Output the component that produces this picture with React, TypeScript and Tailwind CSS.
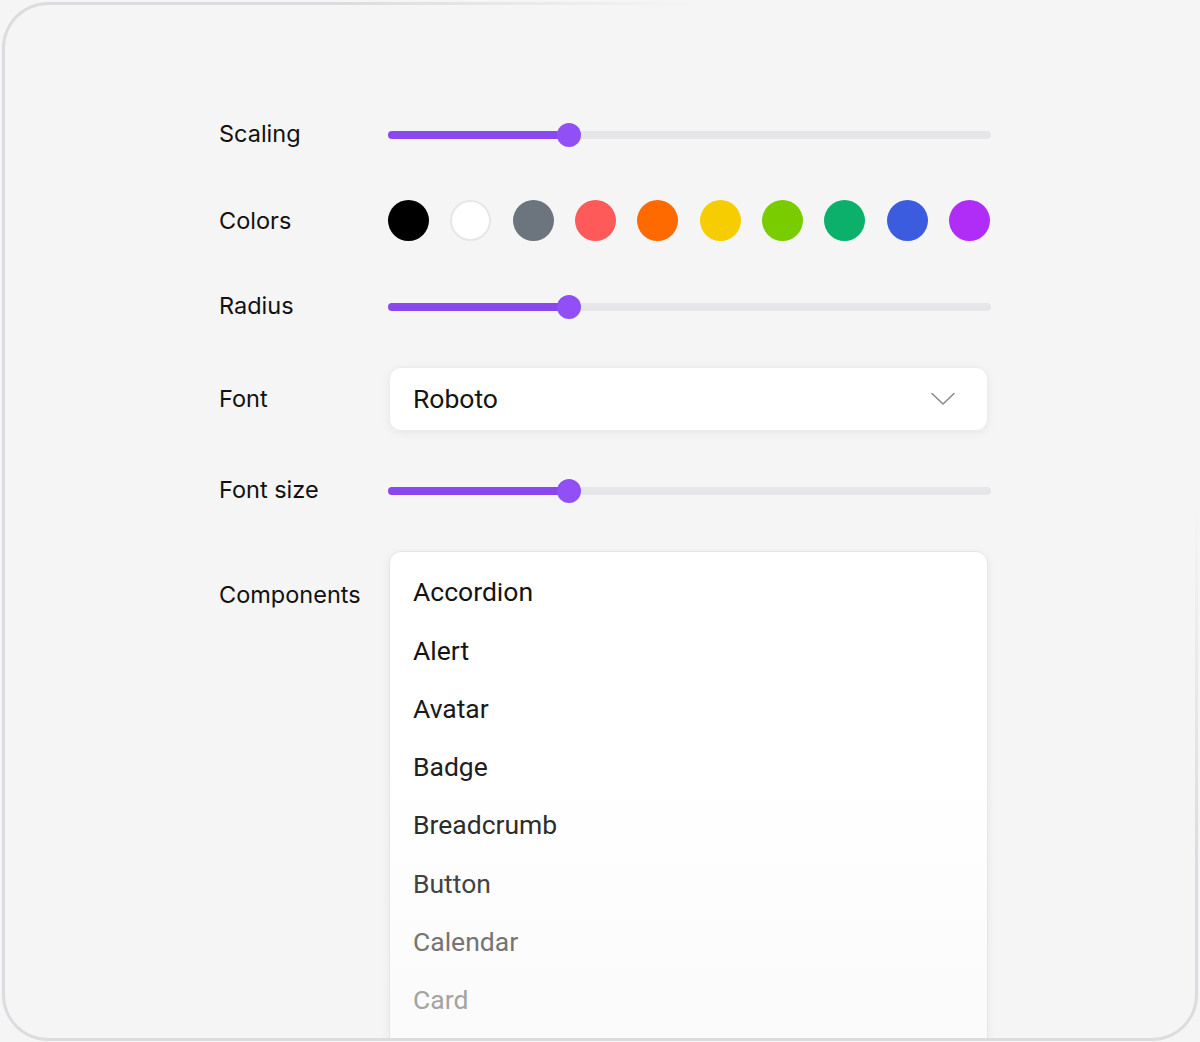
import React from "react";

const colors = [
  "bg-[#000000]",
  "bg-white border-2 border-[#e6e6e6]",
  "bg-[#6c747d]",
  "bg-[#ff5a5a]",
  "bg-[#ff6a00]",
  "bg-[#f5cd00]",
  "bg-[#79cc00]",
  "bg-[#0bb06a]",
  "bg-[#3c5ce0]",
  "bg-[#b02df7]",
];

const items: { name: string; color: string }[] = [
  { name: "Accordion", color: "text-[#141414]" },
  { name: "Alert", color: "text-[#141414]" },
  { name: "Avatar", color: "text-[#1a1a1a]" },
  { name: "Badge", color: "text-[#202020]" },
  { name: "Breadcrumb", color: "text-[#2c2c2c]" },
  { name: "Button", color: "text-[#434343]" },
  { name: "Calendar", color: "text-[#747474]" },
  { name: "Card", color: "text-[#a3a3a3]" },
];

function Slider() {
  return (
    <div className="relative flex h-full w-[603px] items-center pt-[2px]">
      <div className="h-[8px] w-full rounded-full bg-[#e6e6e9]" />
      <div className="absolute left-0 top-[calc(50%+1px)] h-[8px] w-[181px] -translate-y-1/2 rounded-full bg-[#8a47ef]" />
      <div className="absolute left-[169px] top-[calc(50%+1px)] h-[24px] w-[24px] -translate-y-1/2 rounded-full bg-[#9150f6]" />
    </div>
  );
}

function Label({ children }: { children: React.ReactNode }) {
  return (
    <div className="w-[169px] shrink-0 text-[23.5px] text-[#111111] [font-family:Inter,'Noto_Sans',sans-serif]">
      {children}
    </div>
  );
}

export default function App() {
  return (
    <div className="h-[1042px] w-[1200px] overflow-hidden bg-[#f5f5f5] px-[2px] pt-[2px]">
      <div className="h-[1039px] w-[1196px] rounded-[46px] bg-[radial-gradient(circle_at_100%_0%,#f5f5f5_500px,#dcdce0_860px)] p-[3px]">
        <div className="h-full w-full overflow-hidden rounded-[43px] bg-[#f5f5f5] pl-[214px] pt-[109px]">
          <div className="flex h-[40px] items-center">
            <Label>Scaling</Label>
            <Slider />
          </div>
          <div className="mt-[46px] flex h-[41px] items-center">
            <Label>Colors</Label>
            <div className="flex w-[603px] items-center justify-between pr-[1px]">
              {colors.map((c, i) => (
                <div key={i} className={`h-[41px] w-[41px] rounded-full ${c}`} />
              ))}
            </div>
          </div>
          <div className="mt-[45px] flex h-[40px] items-center">
            <Label>Radius</Label>
            <Slider />
          </div>
          <div className="mt-[41px] flex h-[63px] items-center">
            <Label>Font</Label>
            <div className="ml-[1px] flex h-[64px] w-[599px] items-center justify-between rounded-[12px] border border-[#ececec] bg-white pl-[23px] pr-[32px] shadow-[0_2px_10px_rgba(0,0,0,0.06)]">
              <span className="text-[26.5px] text-[#141414] [font-family:Roboto,sans-serif]">Roboto</span>
              <svg width="24" height="14" viewBox="0 0 24 14" fill="none">
                <polyline points="1,1.5 12,12 23,1.5" stroke="#8a8a8a" strokeWidth="1.6" strokeLinecap="round" strokeLinejoin="round" />
              </svg>
            </div>
          </div>
          <div className="mt-[40px] flex h-[40px] items-center">
            <Label>Font size</Label>
            <Slider />
          </div>
          <div className="mt-[41px] flex items-start">
            <div className="pt-[26px]">
              <Label>Components</Label>
            </div>
            <div className="ml-[1px] h-[560px] w-[599px] rounded-[12px] border border-[#e6e6e6] bg-[linear-gradient(to_bottom,#ffffff_40%,#f9f9f9_100%)] pt-[11px] shadow-[0_2px_10px_rgba(0,0,0,0.06)]">
              {items.map((it) => (
                <div key={it.name} className={`flex h-[58.3px] items-center pl-[23px] text-[26.5px] [font-family:Roboto,sans-serif] ${it.color}`}>
                  {it.name}
                </div>
              ))}
            </div>
          </div>
        </div>
      </div>
    </div>
  );
}
